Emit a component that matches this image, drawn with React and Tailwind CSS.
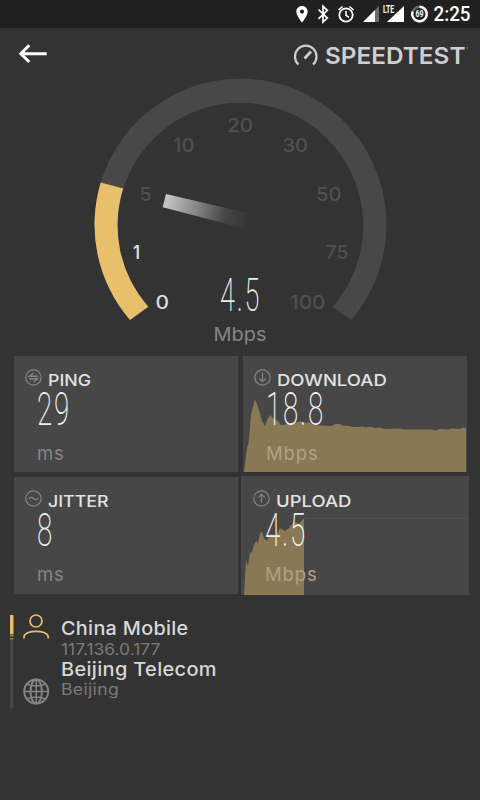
import React from 'react';

const inter = "font-['Inter','Liberation_Sans',sans-serif]";

function StatusBar() {
  return (
    <div className="flex h-7 w-full shrink-0 bg-[#202020]">
      <svg width="480" height="28" viewBox="0 0 480 28" fill="none">
        <path fillRule="evenodd" fill="#fff" d="M302 6c-3.200 0-5.700 2.500-5.700 5.600 0 4.300 5.700 11 5.700 11s5.700-6.700 5.700-11C307.700 8.500 305.200 6 302 6zm0 3.500a2.100 2.100 0 1 1 0 4.200a2.100 2.100 0 0 1 0-4.200z" />
        <path stroke="#fff" strokeWidth="1.700" d="M318.500 9.500l8.800 8.600-4.300 4V6.300l4.300 4-8.800 8.600" />
        <circle cx="346" cy="15" r="6.700" stroke="#fff" strokeWidth="1.800" />
        <path stroke="#fff" strokeWidth="1.600" d="M346 11v4.400l3 1.800M338.500 10l4-3.500M353.500 10l-4-3.500" />
        <path fill="#fff" d="M363 22L375 10V22z" />
        <path fill="#6a6a6a" d="M375 10L379 6V22H375z" />
        <path fill="#fff" d="M387 22L404 6V22z" />
        <text x="383" y="13.300" fill="#fff" fontSize="10" fontWeight="700" textLength="11" lengthAdjust="spacingAndGlyphs" className="font-['Roboto',sans-serif]">LTE</text>
        <circle cx="419.500" cy="14" r="7.300" stroke="#666" strokeWidth="2.400" />
        <path stroke="#fff" strokeWidth="2.400" d="M419.500 6.700A7.300 7.300 0 1 1 412.600 11.600" />
        <text x="415.500" y="17.200" fill="#fff" fontSize="8.500" fontWeight="700" textLength="8" lengthAdjust="spacingAndGlyphs" className="font-['Roboto',sans-serif]">69</text>
        <text x="433.500" y="21.300" fill="#fff" fontSize="19.500" fontWeight="500" textLength="37" lengthAdjust="spacingAndGlyphs" className="font-['Roboto',sans-serif]">2:25</text>
      </svg>
    </div>
  );
}

function Header() {
  return (
    <div className="flex h-11 shrink-0 items-start justify-between pt-3.5 pr-[11px] pl-[18px]">
      <svg width="30" height="24" viewBox="18 42 30 24" fill="none" stroke="#fff" strokeWidth="3">
        <path d="M46.700 53.700H21M29.300 45.200L20.800 53.700L29.300 62" />
      </svg>
      <svg width="186" height="28" viewBox="283 42 186 28" fill="none">
        <path stroke="#cfcfcf" strokeWidth="2.200" d="M298.500 64.500A10.800 10.800 0 1 1 313 64.500" />
        <path stroke="#cfcfcf" strokeWidth="2.800" d="M304.500 58.500L311 51.500" />
        <text x="325" y="63.500" fill="#cfcfcf" fontSize="23.500" fontWeight="600" textLength="140.500" lengthAdjust="spacingAndGlyphs" className={inter}>SPEEDTEST</text>
        <circle cx="467" cy="48" r=".8" fill="#888" />
      </svg>
    </div>
  );
}

const marks = [
  ['0', 155.5, 309, 13.5, '#dcdcdc', 500],
  ['1', 133, 259, 7, '#dcdcdc', 600],
  ['5', 139.5, 200.5, 12, '#505050', 500],
  ['10', 173, 151.5, 21.5, '#505050', 500],
  ['20', 227, 132, 26, '#505050', 500],
  ['30', 282.5, 151.5, 25.5, '#505050', 500],
  ['50', 316, 200.5, 25.5, '#505050', 500],
  ['75', 325.5, 259, 23, '#505050', 500],
  ['100', 290, 309, 35.5, '#505050', 500],
];

function Gauge() {
  return (
    <svg width="480" height="283" viewBox="0 72 480 283" className="shrink-0">
      <defs>
        <linearGradient id="needle" gradientUnits="userSpaceOnUse" x1="164" y1="200" x2="250" y2="222">
          <stop offset="0" stopColor="#c8c8c8" />
          <stop offset=".35" stopColor="#8b8b8b" />
          <stop offset=".7" stopColor="#474747" />
          <stop offset="1" stopColor="#333" />
        </linearGradient>
      </defs>
      <path fill="#484848" d="M130 320A146 146 0 1 1 351 320L332.600 306.700A122.800 122.800 0 1 0 148.300 306.700Z" />
      <path fill="#e8c06c" d="M130 320A146 146 0 0 1 100.700 182.500L123.200 188.500A122.800 122.800 0 0 0 148.300 306.700Z" />
      <path fill="url(#needle)" d="M166 194L250 213.500V230L162.700 207.300Z" />
      {marks.map(([t, x, y, w, c, fw]) => (
        <text key={t} x={x} y={y} fill={c} fontSize="18.500" fontWeight={fw} textLength={w} lengthAdjust="spacingAndGlyphs" className={inter}>{t}</text>
      ))}
      <g transform="translate(220 310.500) scale(.59 1)">
        <text fill="#ececec" fontSize="46" fontWeight="200" letterSpacing="3" className="font-['Roboto',sans-serif]">4.5</text>
      </g>
      <text x="213.500" y="341" fill="#858585" fontSize="18.500" textLength="53" lengthAdjust="spacingAndGlyphs" className={inter}>Mbps</text>
    </svg>
  );
}

function CardIcon({ kind }) {
  return (
    <svg width="17" height="17" viewBox="0 0 17 17" fill="none" stroke="#858585" strokeWidth="1.200" className="shrink-0">
      <circle cx="8.500" cy="8.500" r="7.700" />
      {kind === 'ping' && <path d="M12.800 7.200H4.500L8.300 4.200M4.200 9.800H12.500L8.700 12.800" strokeWidth="1.400" />}
      {kind === 'jitter' && <path d="M3.800 9.300C5.500 6.500 7 7.200 8.500 8.500S11.500 10.500 13.200 7.700" />}
      {kind === 'down' && <path d="M8.500 4V12.500M5.200 9.300L8.500 12.600L11.800 9.300" />}
      {kind === 'up' && <path d="M8.500 13V4.500M5.200 7.700L8.500 4.400L11.800 7.700" />}
    </svg>
  );
}

function Card({ kind, title, value, unit, size, pad, titleClass, unitColor, children }) {
  return (
    <div className={`relative flex flex-col bg-[#474747] ${size}`}>
      {children}
      <div className={`relative flex flex-col ${pad}`}>
        <div className="flex h-[17px] items-start gap-[6px]">
          <CardIcon kind={kind} />
          <span className={`mt-[3px] origin-left text-[16.5px] leading-[17px] font-medium text-[#e2e2e2] ${titleClass} ${inter}`}>{title}</span>
        </div>
        <span className="-mt-px ml-[12px] h-[47px] w-max origin-left scale-x-[0.59] font-['Roboto',sans-serif] text-[47px] leading-[47px] font-extralight tracking-[3px] text-[#f0f0f0]">{value}</span>
        <span className={`mt-[11px] ml-[12px] text-[18.5px] leading-5 tracking-[0.9px] ${unitColor} ${inter}`}>{unit}</span>
      </div>
    </div>
  );
}

function Cards() {
  return (
    <div className="flex h-[240px] shrink-0 items-start gap-[3px] pt-[1px] pl-3.5">
      <div className="flex w-56 flex-col gap-[5px]">
        <Card kind="ping" title="PING" value="29" unit="ms" size="h-[116px] w-56" pad="pl-[11px] pt-[13px]" titleClass="scale-x-[1.08]" unitColor="text-[#858585]" />
        <Card kind="jitter" title="JITTER" value="8" unit="ms" size="h-[117px] w-56" pad="pl-[11px] pt-[13px]" titleClass="scale-x-[1.08]" unitColor="text-[#858585]" />
      </div>
      <div className="flex w-[228px] flex-col items-start gap-1">
        <Card kind="down" title="DOWNLOAD" value="18.8" unit="Mbps" size="ml-[2px] h-[116px] w-[224px]" pad="pl-[11px] pt-[13px]" titleClass="scale-x-[1.12]" unitColor="text-[#b0a283]">
          <svg width="224" height="116" viewBox="243 356 224 116" className="absolute inset-0">
            <path fill="#887854" d="M244 472L247 448L248.500 444L251 415L252 411L255 399L259 410L262 421L265 426L267 420L270 415L274 419L278 421L281 425L295 423L300 421L304 423L309 422L313 425L330 426L333 425.500L335 424L340 424L342 425.500L350 426L352 427L360 427L362 426.500L366 427.500L370 426.500L375 428L380 427.500L384 429L400 428.500L404 429.500L430 429.500L436 430.500L440 429L448 429.500L452 428.500L460 429L463 427.500L466 428V472Z" />
          </svg>
        </Card>
        <Card kind="up" title="UPLOAD" value="4.5" unit="Mbps" size="h-[119px] w-[228px]" pad="pl-[12px] pt-[14px]" titleClass="scale-x-[1.12]" unitColor="text-[#b0a283]">
          <svg width="228" height="119" viewBox="241 476 228 119" className="absolute inset-0">
            <path stroke="#505050" d="M304 518.500H470" />
            <path fill="#887854" d="M244 595L246 561L248 566L250 553L252 552L254 545L256 541L258 543L260 533L262 532L264 538L267 541L269 535L272 534L275 537L280 528L285 531L289 528L294 522L299 524L304 518V595Z" />
          </svg>
        </Card>
      </div>
    </div>
  );
}

function Hosts() {
  return (
    <div className="flex shrink-0 pt-[19px] pl-[10px]">
      <svg width="40" height="96" viewBox="10 614 40 96" fill="none">
        <path fill="#474747" d="M10 640H13.500V708.500H10z" />
        <path fill="#e8c06c" d="M10 615H13.500V634H10z" />
        <path fill="#a4864c" d="M10 634.500H13.500V636.500H10zM10 638H13.500V639.500H10z" />
        <circle cx="36" cy="621" r="6" stroke="#e8c06c" strokeWidth="1.700" />
        <path stroke="#e8c06c" strokeWidth="1.700" d="M24 638.500V637C24 629.500 48.200 629.500 48.200 637V638.500" />
        <g stroke="#858585" strokeWidth="1.900">
          <circle cx="36.200" cy="691.500" r="12" />
          <ellipse cx="36.200" cy="691.500" rx="5.700" ry="12" />
          <path d="M36.200 679.500V703.500M24 691.500H48.500M27 684Q36.200 688 45.400 684M27 699Q36.200 695 45.400 699" strokeWidth="1.500" />
        </g>
      </svg>
      <div className={`flex flex-col pt-[4px] pl-[11px] ${inter}`}>
        <span className="h-[21px] w-max origin-left scale-x-[1.07] text-[18.5px] leading-[21px] font-medium tracking-[0.3px] text-[#d8d8d8]">China Mobile</span>
        <span className="h-[20px] w-max origin-left scale-x-[1.09] text-[16px] leading-[20px] text-[#7a7a7a]">117.136.0.177</span>
        <span className="h-[20px] w-max origin-left scale-x-[1.08] text-[18.5px] leading-[21px] font-medium tracking-[0.3px] text-[#d8d8d8]">Beijing Telecom</span>
        <span className="h-[20px] w-max origin-left scale-x-[1.1] text-[16px] leading-[20px] tracking-[0.3px] text-[#7a7a7a]">Beijing</span>
      </div>
    </div>
  );
}

export default function App() {
  return (
    <div className="flex h-[800px] w-[480px] flex-col overflow-hidden bg-[#333333]">
      <StatusBar />
      <Header />
      <Gauge />
      <Cards />
      <Hosts />
    </div>
  );
}
